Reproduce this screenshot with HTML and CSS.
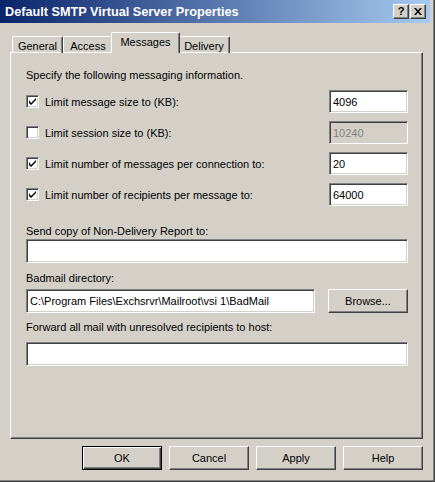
FILE: index.html
```html
<!DOCTYPE html>
<html>
<head>
<meta charset="utf-8">
<link rel="stylesheet" href="styles.css">
</head>
<body>
<div class="window">
  <div class="titlebar">
    <span class="title">Default SMTP Virtual Server Properties</span>
    <div class="tb-buttons">
      <span class="tb-btn help">?</span>
      <span class="tb-btn close"><svg width="8" height="7" viewBox="0 0 8 7"><path d="M0 0h2l2 2.5L6 0h2L5 3.5 8 7H6L4 4.5 2 7H0l3-3.5z" fill="#000"/></svg></span>
    </div>
  </div>
  <div class="content">
    <div class="tabs">
      <div class="tab t-general">General</div>
      <div class="tab t-access">Access</div>
      <div class="tab t-messages active">Messages</div>
      <div class="tab t-delivery">Delivery</div>
    </div>
    <div class="panel">
      <div class="intro">Specify the following messaging information.</div>
      <div class="opts">
        <div class="opt">
          <span class="chk"><span class="box"><svg width="7" height="7" viewBox="0 0 7 7"><path d="M0 2v3l2 2 5-5V-0L2 5z" fill="#000"/></svg></span>Limit message size to (KB):</span>
          <span class="field num">4096</span>
        </div>
        <div class="opt">
          <span class="chk"><span class="box"></span>Limit session size to (KB):</span>
          <span class="field num disabled">10240</span>
        </div>
        <div class="opt">
          <span class="chk"><span class="box"><svg width="7" height="7" viewBox="0 0 7 7"><path d="M0 2v3l2 2 5-5V-0L2 5z" fill="#000"/></svg></span>Limit number of messages per connection to:</span>
          <span class="field num">20</span>
        </div>
        <div class="opt">
          <span class="chk"><span class="box"><svg width="7" height="7" viewBox="0 0 7 7"><path d="M0 2v3l2 2 5-5V-0L2 5z" fill="#000"/></svg></span>Limit number of recipients per message to:</span>
          <span class="field num">64000</span>
        </div>
      </div>
      <div class="group g-ndr">
        <div class="lbl">Send copy of Non-Delivery Report to:</div>
        <div class="field wide"></div>
      </div>
      <div class="group g-bad">
        <div class="lbl">Badmail directory:</div>
        <div class="row">
          <div class="field path">C:\Program Files\Exchsrvr\Mailroot\vsi 1\BadMail</div>
          <div class="btn">Browse...</div>
        </div>
      </div>
      <div class="group g-fwd">
        <div class="lbl">Forward all mail with unresolved recipients to host:</div>
        <div class="field wide"></div>
      </div>
    </div>
    <div class="buttons">
      <div class="btn default">OK</div>
      <div class="btn">Cancel</div>
      <div class="btn">Apply</div>
      <div class="btn">Help</div>
    </div>
  </div>
</div>
</body>
</html>
```
FILE: styles.css
```css
html, body {
  margin: 0;
  padding: 0;
  background: #d4d0c8;
}
body {
  font-family: "Liberation Sans", Arial, sans-serif;
  font-size: 11px;
  color: #000;
}
.window {
  width: 435px;
  height: 482px;
  box-sizing: border-box;
  border-right: 1px solid #404040;
  border-bottom: 1px solid #404040;
  box-shadow: inset -1px -1px 0 #808080;
  padding: 0 4px 3px 0;
  display: flex;
  flex-direction: column;
}
.titlebar {
  height: 23px;
  background: linear-gradient(to right, #0a246a, #a6caf0);
  display: flex;
  align-items: center;
  justify-content: space-between;
  padding: 0 4px 0 5px;
}
.title {
  color: #fff;
  font-weight: bold;
  font-size: 12.7px;
}
.tb-buttons {
  display: flex;
  gap: 1px;
}
.tb-btn {
  width: 16px;
  height: 15px;
  box-sizing: border-box;
  background: #d4d0c8;
  border-top: 1px solid #fff;
  border-left: 1px solid #fff;
  border-right: 1px solid #404040;
  border-bottom: 1px solid #404040;
  box-shadow: inset -1px -1px 0 #808080;
  display: flex;
  align-items: center;
  justify-content: center;
  font-weight: bold;
  font-size: 11px;
  line-height: 1;
}
.content {
  flex: 1;
  display: flex;
  flex-direction: column;
  padding: 9px 7px 0 10px;
}
.tabs {
  display: flex;
  align-items: flex-end;
  padding-left: 2px;
  height: 21px;
  position: relative;
  z-index: 1;
  margin-bottom: -1px;
}
.tab {
  height: 17px;
  box-sizing: border-box;
  border-top: 1px solid #fff;
  border-left: 1px solid #fff;
  border-right: 1px solid #404040;
  box-shadow: inset -1px 0 0 #808080;
  border-radius: 2px 2px 0 0;
  display: flex;
  align-items: center;
  justify-content: center;
  padding-top: 1px;
}
.t-general { width: 51px; }
.t-access { width: 50px; }
.t-messages { width: 69px; }
.t-delivery { width: 52px; }
.tab.active {
  height: 21px;
  margin: 0 -2px;
  background: #d4d0c8;
  padding-bottom: 3px;
  position: relative;
}
.panel {
  height: 387px;
  box-sizing: border-box;
  border-top: 1px solid #fff;
  border-left: 1px solid #fff;
  border-right: 1px solid #404040;
  border-bottom: 1px solid #404040;
  box-shadow: inset -1px -1px 0 #808080;
  padding: 15px 14px 0 15px;
  display: flex;
  flex-direction: column;
}
.intro {
  height: 14px;
  line-height: 14px;
}
.opts {
  margin-top: 8px;
  display: flex;
  flex-direction: column;
  gap: 8px;
}
.opt {
  display: flex;
  align-items: center;
  justify-content: space-between;
}
.chk {
  display: flex;
  align-items: center;
  gap: 6px;
}
.box {
  width: 13px;
  height: 13px;
  box-sizing: border-box;
  background: #fff;
  border-top: 1px solid #808080;
  border-left: 1px solid #808080;
  border-right: 1px solid #fff;
  border-bottom: 1px solid #fff;
  box-shadow: inset 1px 1px 0 #404040, inset -1px -1px 0 #d4d0c8;
  display: flex;
  align-items: center;
  justify-content: center;
}
.field {
  height: 23px;
  box-sizing: border-box;
  background: #fff;
  border-top: 1px solid #808080;
  border-left: 1px solid #808080;
  border-right: 1px solid #fff;
  border-bottom: 1px solid #fff;
  box-shadow: inset 1px 1px 0 #404040, inset -1px -1px 0 #d4d0c8;
  padding: 0 3px;
  display: flex;
  align-items: center;
  white-space: nowrap;
}
.num { width: 79px; }
.disabled {
  background: #d4d0c8;
  color: #808080;
}
.group .field.wide { height: 24px; }
.g-ndr { margin-top: 18px; }
.g-bad { margin-top: 8px; }
.g-fwd { margin-top: 7px; }
.lbl {
  height: 14px;
  line-height: 14px;
  margin-bottom: 1px;
}
.g-bad .lbl { margin-bottom: 4px; }
.g-fwd .lbl { margin-bottom: 8px; }
.row {
  display: flex;
  justify-content: space-between;
}
.path { width: 289px; height: 24px; }
.btn {
  width: 80px;
  height: 24px;
  box-sizing: border-box;
  border-top: 1px solid #fff;
  border-left: 1px solid #fff;
  border-right: 1px solid #404040;
  border-bottom: 1px solid #404040;
  box-shadow: inset -1px -1px 0 #808080;
  display: flex;
  align-items: center;
  justify-content: center;
}
.btn.default {
  border: 1px solid #000;
  box-shadow: inset 1px 1px 0 #fff, inset -1px -1px 0 #404040, inset -2px -2px 0 #808080;
}
.buttons {
  margin-top: 7px;
  display: flex;
  justify-content: flex-end;
  gap: 7px;
}
```
